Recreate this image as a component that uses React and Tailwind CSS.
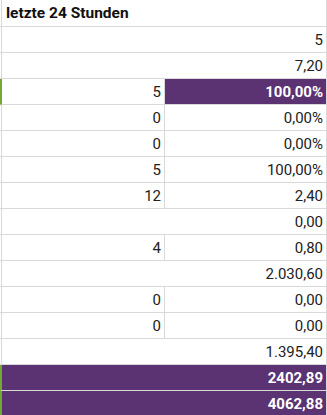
import React from 'react';

const rows = [
  { full: '5' },
  { full: '7,20' },
  { a: '5', b: '100,00%', hl: true },
  { a: '0', b: '0,00%' },
  { a: '0', b: '0,00%' },
  { a: '5', b: '100,00%' },
  { a: '12', b: '2,40' },
  { full: '0,00' },
  { a: '4', b: '0,80' },
  { full: '2.030,60' },
  { a: '0', b: '0,00' },
  { a: '0', b: '0,00' },
  { full: '1.395,40' },
  { full: '2402,89', total: true },
  { full: '4062,88', total: true },
];

const Row = ({ row }) => {
  const marked = row.hl || row.total;
  return (
    <div
      className={
        'flex h-[26px] border-b border-r border-[#d9d9d9] ' +
        (marked ? 'border-l-2 border-l-[#74a832]' : 'pl-px')
      }
    >
      {!marked && <div className="w-px bg-[#d9d9d9]" />}
      {row.full !== undefined ? (
        <div
          className={
            'flex flex-1 items-end justify-end pb-[3px] pr-[3px] leading-[17px] ' +
            (row.total ? 'bg-[#5b3272] font-bold text-white' : 'text-[#222]')
          }
        >
          {row.full}
        </div>
      ) : (
        <>
          <div className="flex w-[163px] items-end justify-end border-r border-[#d9d9d9] pb-[3px] pr-[3px] leading-[17px] text-[#222]">
            {row.a}
          </div>
          <div
            className={
              'flex flex-1 items-end justify-end pb-[3px] pr-[3px] leading-[17px] ' +
              (row.hl ? 'bg-[#5b3272] font-bold text-white' : 'text-[#222]')
            }
          >
            {row.b}
          </div>
        </>
      )}
    </div>
  );
};

export default function App() {
  return (
    <div className="h-[415px] w-[327px] overflow-hidden bg-white font-['Roboto',sans-serif] text-[15px]">
      <div className="flex h-[27px] border-b border-r border-[#d9d9d9] pl-px">
        <div className="w-px bg-[#d9d9d9]" />
        <div className="flex flex-1 items-end pb-[4px] pl-[4px] text-[15.5px] font-bold leading-[18px] text-[#111]">
          letzte 24 Stunden
        </div>
      </div>
      {rows.map((row, i) => (
        <Row key={i} row={row} />
      ))}
    </div>
  );
}
